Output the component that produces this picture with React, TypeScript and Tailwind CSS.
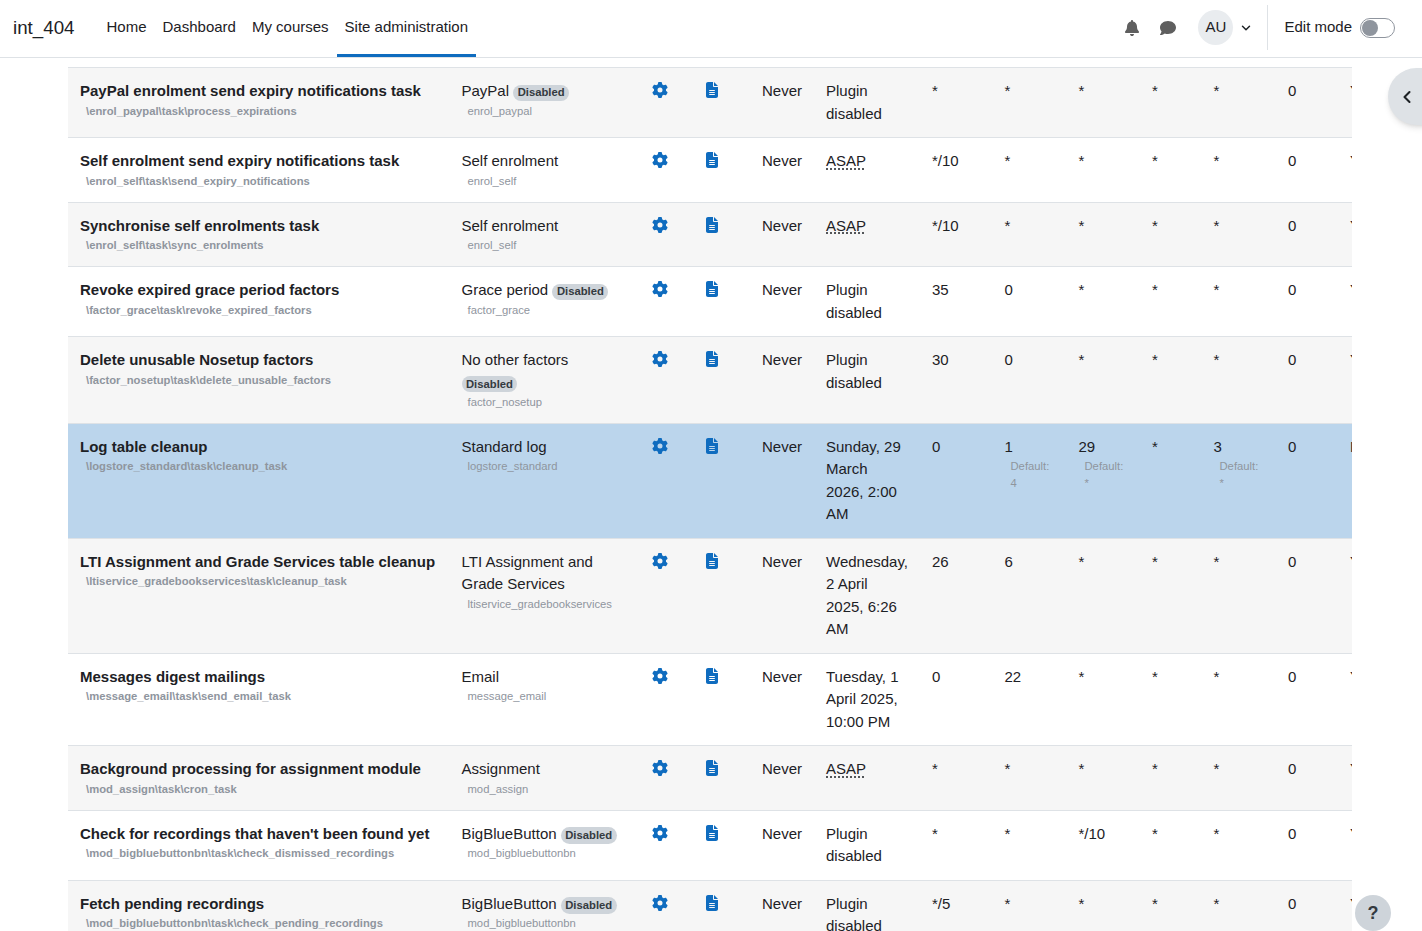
import { ChevronDown, ChevronLeft } from "lucide-react";
import { FaBell, FaComment, FaFileLines, FaGear } from "react-icons/fa6";

type Cron = { value: string; def?: string };

type Task = {
  name: string;
  path: string;
  component: string;
  disabled?: boolean;
  plugin: string;
  next: string;
  minute: Cron;
  hour: Cron;
  day: Cron;
  month: Cron;
  last: string;
  bg: string;
};

const star: Cron = { value: "*" };
const striped = "bg-[#f6f6f6]";
const plain = "bg-white";

const tasks: Task[] = [
  {
    name: "PayPal enrolment send expiry notifications task",
    path: "\\enrol_paypal\\task\\process_expirations",
    component: "PayPal",
    disabled: true,
    plugin: "enrol_paypal",
    next: "Plugin disabled",
    minute: star,
    hour: star,
    day: star,
    month: star,
    last: "Yes",
    bg: striped,
  },
  {
    name: "Self enrolment send expiry notifications task",
    path: "\\enrol_self\\task\\send_expiry_notifications",
    component: "Self enrolment",
    plugin: "enrol_self",
    next: "ASAP",
    minute: { value: "*/10" },
    hour: star,
    day: star,
    month: star,
    last: "Yes",
    bg: plain,
  },
  {
    name: "Synchronise self enrolments task",
    path: "\\enrol_self\\task\\sync_enrolments",
    component: "Self enrolment",
    plugin: "enrol_self",
    next: "ASAP",
    minute: { value: "*/10" },
    hour: star,
    day: star,
    month: star,
    last: "Yes",
    bg: striped,
  },
  {
    name: "Revoke expired grace period factors",
    path: "\\factor_grace\\task\\revoke_expired_factors",
    component: "Grace period",
    disabled: true,
    plugin: "factor_grace",
    next: "Plugin disabled",
    minute: { value: "35" },
    hour: { value: "0" },
    day: star,
    month: star,
    last: "Yes",
    bg: plain,
  },
  {
    name: "Delete unusable Nosetup factors",
    path: "\\factor_nosetup\\task\\delete_unusable_factors",
    component: "No other factors",
    disabled: true,
    plugin: "factor_nosetup",
    next: "Plugin disabled",
    minute: { value: "30" },
    hour: { value: "0" },
    day: star,
    month: star,
    last: "Yes",
    bg: striped,
  },
  {
    name: "Log table cleanup",
    path: "\\logstore_standard\\task\\cleanup_task",
    component: "Standard log",
    plugin: "logstore_standard",
    next: "Sunday, 29 March 2026, 2:00 AM",
    minute: { value: "0" },
    hour: { value: "1", def: "4" },
    day: { value: "29", def: "*" },
    month: { value: "3", def: "*" },
    last: "No",
    bg: "bg-[#bbd5ec]",
  },
  {
    name: "LTI Assignment and Grade Services table cleanup",
    path: "\\ltiservice_gradebookservices\\task\\cleanup_task",
    component: "LTI Assignment and Grade Services",
    plugin: "ltiservice_gradebookservices",
    next: "Wednesday, 2 April 2025, 6:26 AM",
    minute: { value: "26" },
    hour: { value: "6" },
    day: star,
    month: star,
    last: "Yes",
    bg: striped,
  },
  {
    name: "Messages digest mailings",
    path: "\\message_email\\task\\send_email_task",
    component: "Email",
    plugin: "message_email",
    next: "Tuesday, 1 April 2025, 10:00 PM",
    minute: { value: "0" },
    hour: { value: "22" },
    day: star,
    month: star,
    last: "Yes",
    bg: plain,
  },
  {
    name: "Background processing for assignment module",
    path: "\\mod_assign\\task\\cron_task",
    component: "Assignment",
    plugin: "mod_assign",
    next: "ASAP",
    minute: star,
    hour: star,
    day: star,
    month: star,
    last: "Yes",
    bg: striped,
  },
  {
    name: "Check for recordings that haven't been found yet",
    path: "\\mod_bigbluebuttonbn\\task\\check_dismissed_recordings",
    component: "BigBlueButton",
    disabled: true,
    plugin: "mod_bigbluebuttonbn",
    next: "Plugin disabled",
    minute: star,
    hour: star,
    day: { value: "*/10" },
    month: star,
    last: "Yes",
    bg: plain,
  },
  {
    name: "Fetch pending recordings",
    path: "\\mod_bigbluebuttonbn\\task\\check_pending_recordings",
    component: "BigBlueButton",
    disabled: true,
    plugin: "mod_bigbluebuttonbn",
    next: "Plugin disabled",
    minute: { value: "*/5" },
    hour: star,
    day: star,
    month: star,
    last: "Yes",
    bg: striped,
  },
];

const cell = "border-t border-[#dee2e6] p-3 align-top";

function CronCell({ cron }: { cron: Cron }) {
  return (
    <td className={cell}>
      {cron.value}
      {cron.def && (
        <div className="pl-1.5 text-[11.25px] leading-[16.875px] text-[#8f959e]">
          Default: {cron.def}
        </div>
      )}
    </td>
  );
}

function TopBar() {
  return (
    <header className="flex h-[58px] items-stretch border-b border-[#dee2e6] bg-white text-[15px] text-[#1d2125]">
      <div className="ml-[13px] flex items-center text-[18.75px]">int_404</div>
      <nav className="ml-6 flex items-stretch">
        {["Home", "Dashboard", "My courses"].map((item) => (
          <a key={item} className="flex items-center px-2 pb-[3px]">
            {item}
          </a>
        ))}
        <a className="flex items-center border-b-[3px] border-[#0f6cbf] px-2">
          Site administration
        </a>
      </nav>
      <div className="ml-auto flex items-center pb-[2px] pr-[27px]">
        <FaBell size={16} className="text-[#5f5f5f]" />
        <FaComment size={16} className="ml-[20px] text-[#5f5f5f]" />
        <div className="ml-[22px] flex h-[35px] w-[35px] items-center justify-center rounded-full bg-[#e9ecef]">
          AU
        </div>
        <ChevronDown size={14} strokeWidth={2.5} className="ml-[6px]" />
        <div className="ml-[14px] h-[45px] w-px bg-[#dee2e6]" />
        <span className="ml-4">Edit mode</span>
        <div className="ml-2 mt-px flex h-5 w-[35px] items-center rounded-full border border-[#8f959e] bg-white pl-px">
          <div className="h-4 w-4 rounded-full bg-[#8f959e]" />
        </div>
      </div>
    </header>
  );
}

export default function App() {
  return (
    <div className="relative h-[931px] overflow-hidden bg-white font-['Liberation_Sans',sans-serif]">
      <TopBar />
      <main className="ml-[68px] w-[1284px] overflow-hidden pt-[9.25px]">
        <table className="w-[1400px] table-fixed border-b border-[#dee2e6] text-left text-[15px] leading-[22.5px] text-[#1d2125]">
          <colgroup>
            <col className="w-[381.5px]" />
            <col className="w-[190.5px]" />
            <col className="w-[52px]" />
            <col className="w-[58px]" />
            <col className="w-[64px]" />
            <col className="w-[106px]" />
            <col className="w-[72.5px]" />
            <col className="w-[74px]" />
            <col className="w-[73.5px]" />
            <col className="w-[61.5px]" />
            <col className="w-[74.5px]" />
            <col className="w-[62px]" />
            <col />
          </colgroup>
          <tbody>
            {tasks.map((task) => (
              <tr key={task.name} className={task.bg}>
                <td className={cell}>
                  <div className="font-bold">{task.name}</div>
                  <div className="pl-1.5 text-[11.25px] font-bold leading-[16.875px] text-[#8f959e]">
                    {task.path}
                  </div>
                </td>
                <td className={cell}>
                  {task.component}{" "}
                  {task.disabled && (
                    <span className="inline-block rounded-full bg-[#ced4da] px-[4.5px] py-[2.5px] text-[11.25px] font-bold leading-[11.25px] text-[#343a40]">
                      Disabled
                    </span>
                  )}
                  <div className="pl-1.5 text-[11.25px] leading-[16.875px] text-[#8f959e]">
                    {task.plugin}
                  </div>
                </td>
                <td className={cell}>
                  <FaGear size={16} className="mt-[2px] text-[#0f6cbf]" />
                </td>
                <td className={cell}>
                  <FaFileLines size={16} className="mt-[2px] text-[#0f6cbf]" />
                </td>
                <td className={cell}>Never</td>
                <td className={cell}>
                  {task.next === "ASAP" ? (
                    <abbr title="As soon as possible" className="underline decoration-dotted underline-offset-2">
                      ASAP
                    </abbr>
                  ) : (
                    task.next
                  )}
                </td>
                <CronCell cron={task.minute} />
                <CronCell cron={task.hour} />
                <CronCell cron={task.day} />
                <td className={cell}>*</td>
                <CronCell cron={task.month} />
                <td className={cell}>0</td>
                <td className={cell}>{task.last}</td>
              </tr>
            ))}
          </tbody>
        </table>
      </main>
      <button className="absolute left-[1388px] top-[68px] flex h-[57px] w-[60px] items-center rounded-l-full bg-[#dee2e6] pl-[9px] text-[#1d2125] shadow-md">
        <ChevronLeft size={20} strokeWidth={2.5} />
      </button>
      <button className="absolute left-[1355px] top-[895px] flex h-9 w-9 items-center justify-center rounded-full bg-[#ced4da] text-[18px] font-bold text-[#343a40]">
        ?
      </button>
    </div>
  );
}
